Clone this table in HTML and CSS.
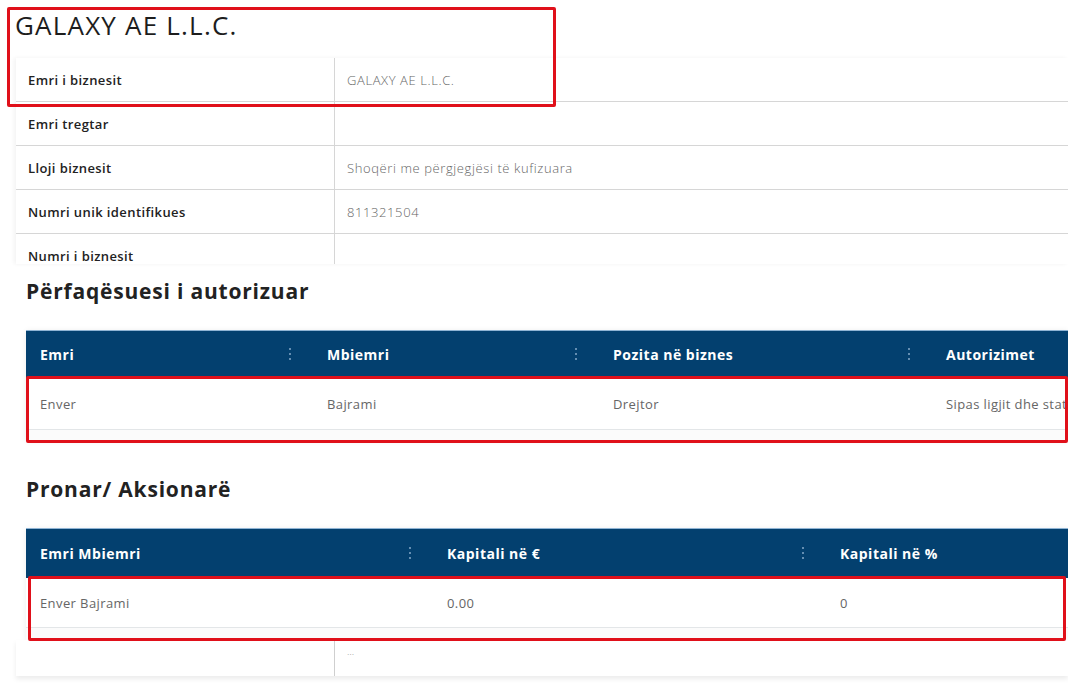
FILE: index.html
```html
<!DOCTYPE html>
<html lang="sq">
<head>
    <meta charset="UTF-8">
    <meta name="viewport" content="width=device-width, initial-scale=1.0">
    <title>GALAXY AE L.L.C.</title>
    <link rel="stylesheet" href="styles.css">
</head>
<body>
    <section class="company">
        <h1 class="company-title">GALAXY AE L.L.C.</h1>
        <div class="info-card">
            <div class="info-row">
                <div class="info-label">Emri i biznesit</div>
                <div class="info-value">GALAXY AE L.L.C.</div>
            </div>
            <div class="info-row">
                <div class="info-label">Emri tregtar</div>
                <div class="info-value"></div>
            </div>
            <div class="info-row">
                <div class="info-label">Lloji biznesit</div>
                <div class="info-value">Shoqëri me përgjegjësi të kufizuara</div>
            </div>
            <div class="info-row">
                <div class="info-label">Numri unik identifikues</div>
                <div class="info-value">811321504</div>
            </div>
            <div class="info-row">
                <div class="info-label">Numri i biznesit</div>
                <div class="info-value"></div>
            </div>
        </div>
    </section>

    <section class="block">
        <h2 class="block-title">Përfaqësuesi i autorizuar</h2>
        <div class="grid-card">
            <div class="grid-head cols-rep">
                <div class="head-cell">Emri<span class="dots"><i></i><i></i><i></i></span></div>
                <div class="head-cell">Mbiemri<span class="dots"><i></i><i></i><i></i></span></div>
                <div class="head-cell">Pozita në biznes<span class="dots"><i></i><i></i><i></i></span></div>
                <div class="head-cell">Autorizimet</div>
            </div>
            <div class="grid-row cols-rep">
                <div class="cell">Enver</div>
                <div class="cell">Bajrami</div>
                <div class="cell">Drejtor</div>
                <div class="cell">Sipas ligjit dhe statutit</div>
            </div>
            <div class="grid-foot"></div>
        </div>
    </section>

    <section class="block block-owners">
        <h2 class="block-title">Pronar/ Aksionarë</h2>
        <div class="grid-card">
            <div class="grid-head cols-own tall">
                <div class="head-cell">Emri Mbiemri<span class="dots"><i></i><i></i><i></i></span></div>
                <div class="head-cell">Kapitali në €<span class="dots"><i></i><i></i><i></i></span></div>
                <div class="head-cell">Kapitali në %</div>
            </div>
            <div class="grid-row cols-own short">
                <div class="cell">Enver Bajrami</div>
                <div class="cell">0.00</div>
                <div class="cell">0</div>
            </div>
            <div class="grid-foot wide"></div>
        </div>
    </section>

    <div class="info-card info-tail">
        <div class="info-row">
            <div class="info-label"></div>
            <div class="info-value">…</div>
        </div>
    </div>

    <div class="mark mark-company"></div>
    <div class="mark mark-rep"></div>
    <div class="mark mark-owner"></div>
</body>
</html>
```

FILE: styles.css
```css
body {
    font-family: "Open Sans", Arial, sans-serif;
    background-color: #ffffff;
    color: #222;
    margin: 0;
    padding: 0;
    overflow: hidden;
    height: 692px;
    position: relative;
}

/* top block with the business data */
.company-title {
    margin: 0;
    padding: 10px 0 0 15px;
    height: 48px;
    font-size: 26px;
    line-height: 30px;
    font-weight: 500;
    color: #1d1d1d;
    letter-spacing: 1.2px;
}

.info-card {
    margin-left: 16px;
    height: 206px;
    overflow: hidden;
    background: #fff;
    box-shadow: -2px 0 4px rgba(0, 0, 0, 0.05);
}

.info-row {
    display: grid;
    grid-template-columns: 319px 1fr;
    height: 44px;
    border-bottom: 1px solid #d6d6d6;
    box-sizing: border-box;
}

.info-label {
    padding: 0 12px;
    font-size: 13px;
    font-weight: 600;
    letter-spacing: 0.4px;
    color: #222;
    display: flex;
    align-items: center;
    border-right: 1px solid #d6d6d6;
}

.info-value {
    padding: 0 12px;
    font-size: 13px;
    font-weight: 300;
    letter-spacing: 0.6px;
    color: #666;
    display: flex;
    align-items: center;
}

/* tables */
.block {
    padding: 15px 0 0 26px;
}

.block-owners {
    padding-top: 37px;
}

.block-title {
    margin: 0 0 27px;
    font-size: 21px;
    line-height: 24px;
    font-weight: 700;
    letter-spacing: 0.8px;
    color: #222;
}

.grid-card {
    background: #fff;
    box-shadow: 0 1px 6px rgba(0, 0, 0, 0.08);
}

.grid-head {
    display: grid;
    height: 48px;
    background-color: #03406f;
    border-top: 1px solid #8fb4d4;
    box-sizing: border-box;
}

.grid-head.tall {
    height: 50px;
}

.cols-rep {
    grid-template-columns: 287px 286px 333px 1fr;
}

.cols-own {
    grid-template-columns: 407px 393px 1fr;
}

.head-cell {
    position: relative;
    padding: 0 14px;
    display: flex;
    align-items: center;
    color: #fff;
    font-size: 14px;
    font-weight: 700;
    letter-spacing: 0.5px;
    white-space: nowrap;
}

.dots {
    position: absolute;
    right: 22px;
    top: 50%;
    margin-top: -7px;
    display: flex;
    flex-direction: column;
    gap: 3px;
}

.dots i {
    width: 2px;
    height: 2px;
    border-radius: 50%;
    background-color: #86a8c8;
}

.grid-row {
    display: grid;
    height: 52px;
    border-bottom: 1px solid #e3e6e8;
    box-sizing: border-box;
}

.grid-row.short {
    height: 50px;
}

.cell {
    padding: 0 14px;
    display: flex;
    align-items: center;
    font-size: 13px;
    letter-spacing: 0.4px;
    color: #666;
    white-space: nowrap;
    overflow: hidden;
}

.grid-foot {
    height: 10px;
    background: #fbfbfb;
}

.grid-foot.wide {
    height: 12px;
}

.info-tail {
    height: 36px;
    box-shadow: 0 3px 5px rgba(0, 0, 0, 0.08);
}

.info-tail .info-row {
    height: 36px;
    border-bottom: none;
}

.info-tail .info-label {
    border-right-color: #cfcfcf;
}

.info-tail .info-value {
    align-items: flex-start;
    padding-top: 4px;
    font-size: 10px;
    color: #999;
}

/* red annotation frames drawn over the screenshot */
.mark {
    position: absolute;
    border: 3px solid #e0101a;
    border-radius: 2px;
    box-sizing: border-box;
}

.mark-company {
    left: 7px;
    top: 7px;
    width: 549px;
    height: 100px;
}

.mark-rep {
    left: 26px;
    top: 376px;
    width: 1042px;
    height: 67px;
}

.mark-owner {
    left: 28px;
    top: 576px;
    width: 1038px;
    height: 65px;
}
```
